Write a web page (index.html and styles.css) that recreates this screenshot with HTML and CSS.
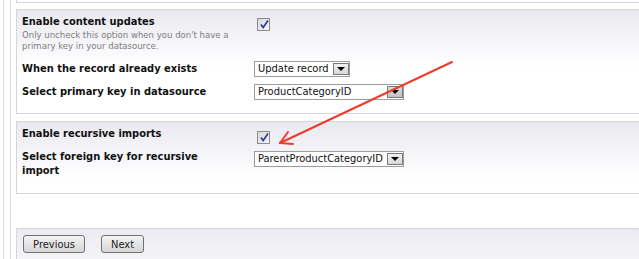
FILE: index.html
```html
<!DOCTYPE html>
<html>
    <head>
        <meta charset="utf-8" />
        <title>Import settings</title>
        <link rel="stylesheet" href="styles.css">
    </head>

    <body>
        <div class="frame">
            <div class="main">
                <div class="prev-box"></div>

                <div class="panel">
                    <div class="row row-top">
                        <div class="label-cell">
                            <label class="field-label">Enable content updates</label>
                            <p class="hint">Only uncheck this option when you don't have a primary key in your datasource.</p>
                        </div>
                        <div class="control">
                            <span class="check">
                                <svg width="11" height="11" viewBox="0 0 11 11"><path d="M2 5.5 L4.2 8.6 L9 1.6" fill="none" stroke="#2c3d93" stroke-width="1.7" /></svg>
                            </span>
                        </div>
                    </div>
                    <div class="row">
                        <div class="label-cell"><label class="field-label">When the record already exists</label></div>
                        <div class="control">
                            <span class="select w-short">Update record<span class="drop"></span></span>
                        </div>
                    </div>
                    <div class="row row-last">
                        <div class="label-cell"><label class="field-label">Select primary key in datasource</label></div>
                        <div class="control">
                            <span class="select w-long">ProductCategoryID<span class="drop hover"></span></span>
                        </div>
                    </div>
                </div>

                <div class="panel panel-recursive">
                    <div class="row row-check">
                        <div class="label-cell"><label class="field-label">Enable recursive imports</label></div>
                        <div class="control">
                            <span class="check">
                                <svg width="11" height="11" viewBox="0 0 11 11"><path d="M2 5.5 L4.2 8.6 L9 1.6" fill="none" stroke="#2c3d93" stroke-width="1.7" /></svg>
                            </span>
                        </div>
                    </div>
                    <div class="row row-wrap">
                        <div class="label-cell"><label class="field-label">Select foreign key for recursive import</label></div>
                        <div class="control">
                            <span class="select w-long">ParentProductCategoryID<span class="drop"></span></span>
                        </div>
                    </div>
                </div>

                <div class="buttons">
                    <button class="btn btn-prev">Previous</button>
                    <button class="btn btn-next">Next</button>
                </div>
            </div>
        </div>

        <!-- annotation arrow drawn over the form -->
        <svg class="annotation" width="639" height="259" viewBox="0 0 639 259">
            <g fill="none" stroke="#ee3b2b" stroke-width="2" stroke-linecap="round">
                <path d="M452 62 L280 143" />
                <path d="M280 143 L293 144" />
                <path d="M280 143 L288 132" />
            </g>
        </svg>
    </body>
</html>
```

FILE: styles.css
```css
* {
    margin: 0;
    padding: 0;
    box-sizing: border-box;
}
html, body {
    height: 100%;
}
body {
    overflow: hidden;
    background: #fff;
    color: #111;
    font-family: "DejaVu Sans Condensed", "Liberation Sans", sans-serif;
    font-size: 11px;
}

.frame {
    min-height: 100%;
    margin-left: 3px;
    padding-left: 6px;
    border-left: 1px solid #dadada;
}
.main {
    min-height: 259px;
    padding-left: 5px;
    border-left: 1px solid #dadada;
}
.prev-box {
    height: 3px;
    margin-right: -20px;
    border-left: 1px solid #d6d6d6;
    border-bottom: 1px solid #d6d6d6;
}

.panel {
    margin: 6px -20px 0 0;
    padding: 5px 0 13px 5px;
    border: 1px solid #d6d6d6;
    background: linear-gradient(#e9e9f0, #ffffff 58px);
}
.panel-recursive {
    margin-top: 7px;
    padding-bottom: 15px;
}

.row {
    display: grid;
    grid-template-columns: 232px auto;
    align-items: center;
    margin-top: 7px;
}
.row-top {
    align-items: start;
    margin-top: 0;
}
.row-top + .row {
    margin-top: 10px;
}
.row-check {
    align-items: start;
    margin-top: 0;
}
.row-check .check {
    margin-top: 4px;
}
.row-wrap {
    align-items: start;
    margin-top: 6px;
}
.row-wrap .select {
    margin-top: 1px;
}

.field-label {
    display: block;
    max-width: 205px;
    font-weight: bold;
    line-height: 14px;
    color: #111;
}
.hint {
    font-size: 9.5px;
    line-height: 11px;
    color: #7c7c7c;
}

.control {
    display: flex;
    align-items: center;
}
.check {
    display: block;
    width: 13px;
    height: 13px;
    margin: 3px 0 0 3px;
    padding: 0 0 0 1px;
    border: 1px solid #8c8c8c;
    background: linear-gradient(135deg, #d6d6dc, #f7f7f9);
}
.check svg {
    display: block;
}

.select {
    position: relative;
    display: block;
    height: 16px;
    padding: 0 0 0 3px;
    border: 1px solid #9c9c9c;
    background: #fff;
    color: #111;
    line-height: 14px;
    white-space: nowrap;
}
.w-short {
    width: 96px;
}
.w-long {
    width: 150px;
}
.drop {
    position: absolute;
    top: 1px;
    right: 0;
    width: 16px;
    height: 12px;
    border: 1px solid #7a7a7a;
    background: linear-gradient(#f0f0f0, #d8d8d8);
}
.drop.hover {
    background: linear-gradient(#dcdcdc, #c4c4c4);
}
.drop::after {
    content: "";
    position: absolute;
    left: 3px;
    top: 3px;
    border-left: 4px solid transparent;
    border-right: 4px solid transparent;
    border-top: 4px solid #000;
}

.buttons {
    display: flex;
    gap: 16px;
    min-height: 40px;
    margin: 34px -20px 0 0;
    padding: 6px 0 0 6px;
    border-top: 1px solid #d6d6d6;
    border-left: 1px solid #d6d6d6;
    background: linear-gradient(#eaeaf1, #f4f4f8 30px);
}
.btn {
    height: 18px;
    border: 1px solid #707070;
    border-radius: 3px;
    background: linear-gradient(#f4f4f4, #e4e4e4 50%, #d6d6d6);
    color: #222;
    font-family: "DejaVu Sans Condensed", "Liberation Sans", sans-serif;
    font-size: 11px;
    line-height: 15px;
}
.btn-prev {
    width: 62px;
}
.btn-next {
    width: 43px;
}

.annotation {
    position: absolute;
    left: 0;
    top: 0;
    pointer-events: none;
}
```
